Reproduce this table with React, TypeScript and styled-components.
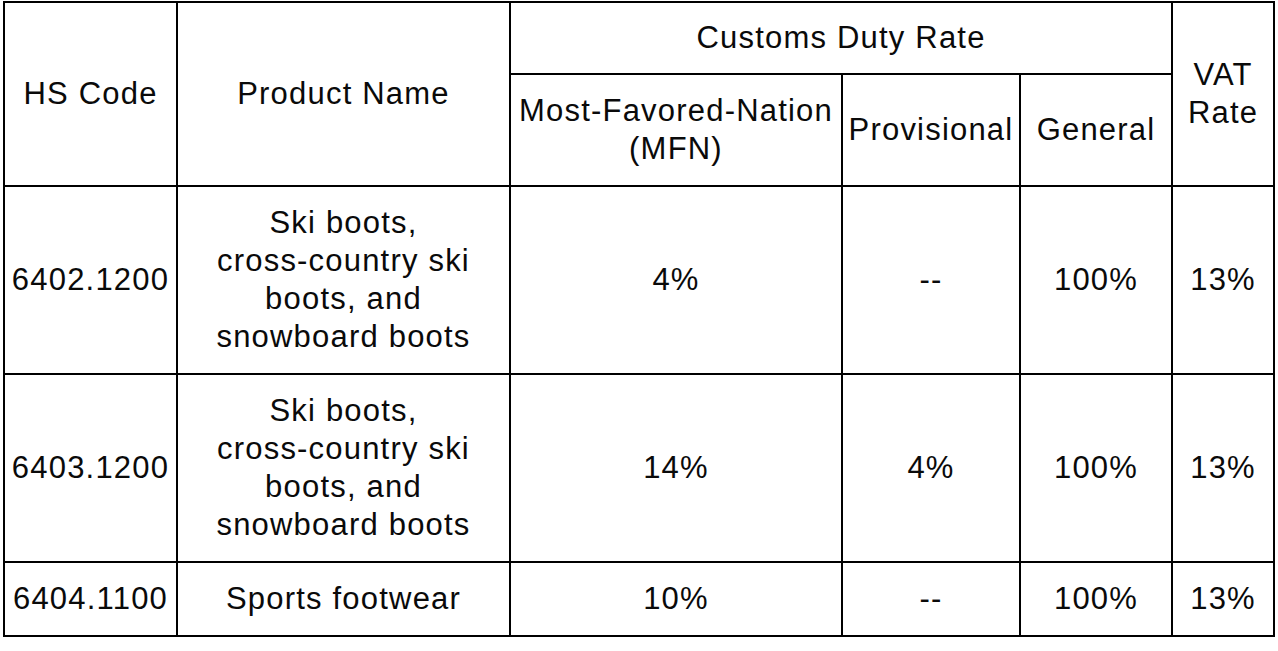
import React from "react";
import styled, { createGlobalStyle } from "styled-components";

const Global = createGlobalStyle`
  html, body { margin: 0; padding: 0; background: #ffffff; }
  body { font-family: "Liberation Sans", Arial, sans-serif; color: #000; }
`;

const Page = styled.div`
  padding: 1px 0 0 3px;
`;

const Table = styled.table`
  border-collapse: collapse;
  table-layout: fixed;
  width: 1270px;
  font-family: "Liberation Sans", Arial, sans-serif;
  font-size: 31px;
  letter-spacing: 1.2px;
  line-height: 38px;
  color: #0a0a0a;
`;

const Row = styled.tr<{ $h: number }>`
  height: ${(p) => p.$h}px;
`;

const Cell = styled.td`
  border: 2.5px solid #000;
  text-align: center;
  vertical-align: middle;
  padding: 0 2px;
  white-space: nowrap;
  font-weight: 400;
`;

const Head = styled(Cell).attrs({ as: "th" })``;

const columns = [173, 333, 332, 178, 152, 102];

type RowData = {
  code: string;
  name: React.ReactNode;
  mfn: string;
  prov: string;
  gen: string;
  vat: string;
  h: number;
};

const skiName = (
  <>
    Ski boots,
    <br />
    cross-country ski
    <br />
    boots, and
    <br />
    snowboard boots
  </>
);

const rows: RowData[] = [
  { code: "6402.1200", name: skiName, mfn: "4%", prov: "--", gen: "100%", vat: "13%", h: 188 },
  { code: "6403.1200", name: skiName, mfn: "14%", prov: "4%", gen: "100%", vat: "13%", h: 188 },
  { code: "6404.1100", name: "Sports footwear", mfn: "10%", prov: "--", gen: "100%", vat: "13%", h: 74 },
];

export default function App() {
  return (
    <Page>
      <Global />
      <Table>
        <colgroup>
          {columns.map((w, i) => (
            <col key={i} style={{ width: w }} />
          ))}
        </colgroup>
        <thead>
          <Row $h={72}>
            <Head rowSpan={2}>HS Code</Head>
            <Head rowSpan={2}>Product Name</Head>
            <Head colSpan={3}>Customs Duty Rate</Head>
            <Head rowSpan={2}>
              VAT
              <br />
              Rate
            </Head>
          </Row>
          <Row $h={112}>
            <Head>
              Most-Favored-Nation
              <br />
              (MFN)
            </Head>
            <Head>Provisional</Head>
            <Head>General</Head>
          </Row>
        </thead>
        <tbody>
          {rows.map((r) => (
            <Row $h={r.h} key={r.code}>
              <Cell>{r.code}</Cell>
              <Cell>{r.name}</Cell>
              <Cell>{r.mfn}</Cell>
              <Cell>{r.prov}</Cell>
              <Cell>{r.gen}</Cell>
              <Cell>{r.vat}</Cell>
            </Row>
          ))}
        </tbody>
      </Table>
    </Page>
  );
}
